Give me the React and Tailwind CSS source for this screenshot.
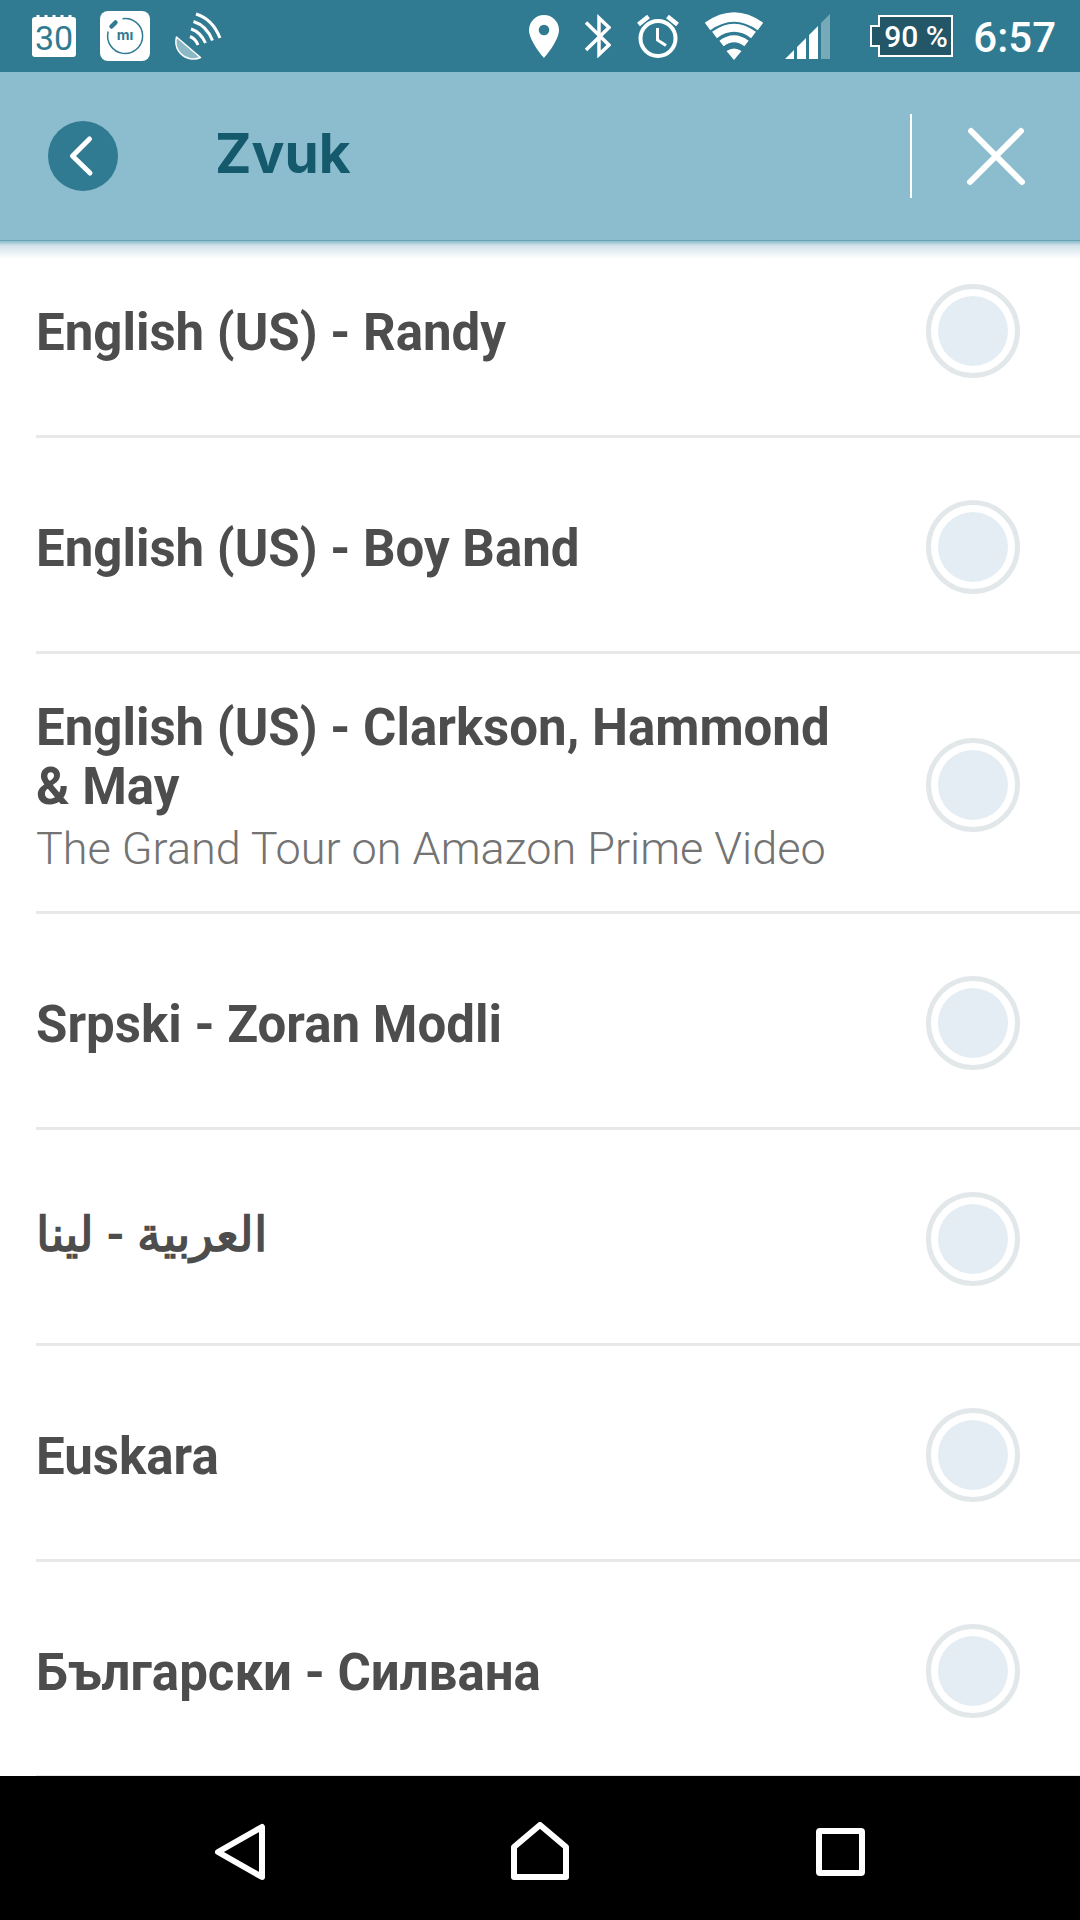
import React, { useState } from "react";

const voices = [
  { id: "randy", name: "English (US) - Randy" },
  { id: "boyband", name: "English (US) - Boy Band" },
  {
    id: "grandtour",
    name: "English (US) - Clarkson, Hammond & May",
    note: "The Grand Tour on Amazon Prime Video"
  },
  { id: "modli", name: "Srpski - Zoran Modli" },
  { id: "lina", name: "العربية - لينا", rtl: true },
  { id: "euskara", name: "Euskara" },
  { id: "silvana", name: "Български - Силвана" }
];

const CalendarIcon = () => (
  <svg className="w-11 h-11" viewBox="0 0 44 44" fill="none">
    <path d="M6 5V1M14 5V1M22 5V1M30 5V1M38 5V1" stroke="#fff" strokeWidth="3" />
    <rect y="3" width="44" height="40" rx="3" fill="#fff" />
    <text x="22" y="36" textAnchor="middle" fontFamily="Roboto, sans-serif" fontSize="34" fill="#307b92">30</text>
  </svg>
);

const MiIcon = () => (
  <svg className="w-[50px] h-[50px]" viewBox="0 0 50 50" fill="none">
    <rect width="50" height="50" rx="8" fill="#fff" />
    <path d="M22.500 7.700A17.500 17.500 0 1 1 8.200 20.500" stroke="#307b92" strokeWidth="1.500" />
    <path d="M11.500 15.500L15.500 11.500" stroke="#307b92" strokeWidth="4.500" strokeLinecap="round" />
    <text x="25" y="29" textAnchor="middle" fontFamily="Inter, sans-serif" fontWeight="700" fontSize="14" fill="#307b92">mı</text>
  </svg>
);

const DishIcon = () => (
  <svg className="w-12 h-[50px]" viewBox="0 0 48 50" fill="none" stroke="#fff">
    <path d="M2.500 26L26.500 46.500C20 49.500 12 48 7 43C2.500 38.500 1 32 2.500 26Z" fill="#8bb8c5" strokeWidth="1.500" strokeLinejoin="round" />
    <path d="M16 25.500Q21.500 27.500 24 34M17 18Q26.500 21 31.500 32M19.500 10.500Q32.500 14.500 38.500 29.500M22 3Q38.500 8 46 27" strokeWidth="3" />
  </svg>
);

const PinIcon = () => (
  <svg className="w-[30px] h-11" viewBox="0 0 30 44" fill="#fff">
    <path fillRule="evenodd" d="M15 1A15 15 0 0 0 0 16C0 27 15 44 15 44S30 27 30 16A15 15 0 0 0 15 1ZM15 10.700A5.300 5.300 0 1 1 15 21.300A5.300 5.300 0 0 1 15 10.700Z" />
  </svg>
);

const BluetoothIcon = () => (
  <svg className="w-[26px] h-11" viewBox="0 0 26 44" fill="none" stroke="#fff" strokeWidth="3.500">
    <path d="M1 8.500L24 31L14 40.500V4L24 13.500L1 36" />
  </svg>
);

const AlarmIcon = () => (
  <svg className="w-[42px] h-11" viewBox="0 0 42 44" fill="none" stroke="#fff">
    <circle cx="21" cy="24.500" r="17.500" strokeWidth="4" />
    <path d="M1.500 10.500L11.500 2.500M40.500 10.500L30.500 2.500" strokeWidth="4.500" />
    <path d="M20.500 14V26L29 31.500" strokeWidth="3" />
  </svg>
);

const WifiIcon = () => (
  <svg className="w-[58px] h-12" viewBox="0 0 58 48" fill="none" stroke="#fff">
    <path d="M2.500 14.500Q29 -4.500 55.500 14.500" strokeWidth="9.500" />
    <path d="M9.500 23Q29 8.500 48.500 23" strokeWidth="8" />
    <path d="M16.500 31.500Q29 22 41.500 31.500" strokeWidth="7" />
    <path d="M21.500 39Q29 34 36.500 39L29 48Z" fill="#fff" stroke="none" />
  </svg>
);

const SignalIcon = () => (
  <svg className="w-[45px] h-[45px]" viewBox="0 0 45 45" fill="#fff">
    <path d="M0 45L9 36V45ZM12 33L21 24V45H12ZM24 21L33 12V45H24Z" />
    <path d="M36 9L45 0V45H36Z" fillOpacity="0.35" />
  </svg>
);

const BatteryIcon = () => (
  <svg className="w-[83px] h-[43px]" viewBox="0 0 83 43">
    <path d="M9 1H82V41H9V31H1V11H9Z" fill="#235666" stroke="#fff" strokeWidth="2" />
    <text x="46" y="32" textAnchor="middle" fontFamily="Roboto, sans-serif" fontWeight="500" fontSize="30" fill="#fff">90 %</text>
  </svg>
);

const StatusBar = () => (
  <div className="flex h-[72px] shrink-0 items-center justify-between bg-[#307b92] pl-8 pr-6">
    <div className="flex items-center gap-6">
      <CalendarIcon />
      <MiIcon />
      <DishIcon />
    </div>
    <div className="flex items-center">
      <div className="flex items-center gap-[26px]">
        <PinIcon />
        <BluetoothIcon />
        <AlarmIcon />
        <WifiIcon />
      </div>
      <div className="ml-[22px] flex items-center gap-10">
        <SignalIcon />
        <BatteryIcon />
      </div>
      <span className="ml-5 pt-1 text-[42px] leading-[48px] font-medium text-white">6:57</span>
    </div>
  </div>
);

const Header = ({ title }) => (
  <header className="relative z-10 flex h-[169px] shrink-0 items-center border-b border-[#69a3b4] bg-[#8bbdce] pl-12 pr-[54px]">
    <button type="button" aria-label="Back" className="flex h-[70px] w-[70px] items-center justify-center rounded-full bg-[#307b92]">
      <svg className="w-[70px] h-[70px]" viewBox="0 0 70 70" fill="none" stroke="#fff" strokeWidth="5" strokeLinecap="round" strokeLinejoin="round">
        <path d="M41.500 18L24.500 35L42 52" />
      </svg>
    </button>
    <h1 className="ml-[97px] flex-1 pb-1.5 font-[Inter,sans-serif] text-[55px] leading-[64px] font-bold text-[#15596d]">{title}</h1>
    <div className="h-[84px] w-0.5 bg-white" />
    <button type="button" aria-label="Close" className="ml-[54px]">
      <svg className="w-[60px] h-[60px]" viewBox="0 0 60 60" fill="none" stroke="#fff" strokeWidth="6" strokeLinecap="round">
        <path d="M5 5L56 56M55 5L4 56" />
      </svg>
    </button>
    <div className="absolute inset-x-0 top-full mt-px h-[18px] bg-linear-to-b from-[#8bbdce] via-[#d3e2ea] via-25% to-transparent" />
  </header>
);

const VoiceRow = ({ voice, selected, onSelect }) => (
  <li className="ml-9 border-b-[3px] border-[#e8e8e8]">
    <label className="flex min-h-[213px] items-center gap-15 pt-10 pr-15 pb-9">
      <span className="flex-1 pt-1">
        {voice.rtl ? (
          <span dir="rtl" className="block pb-3 text-left text-[48px] leading-[59px] font-bold text-[#4d4d4d]">
            {voice.name}
          </span>
        ) : (
          <span className="block text-[51px] leading-[59px] font-bold text-[#4d4d4d]">{voice.name}</span>
        )}
        {voice.note && (
          <span className="mt-1.5 block text-[45px] leading-[53px] font-light text-[#737373]">{voice.note}</span>
        )}
      </span>
      <input
        type="radio"
        name="voice"
        checked={selected}
        onChange={() => onSelect(voice.id)}
        className="h-[94px] w-[94px] shrink-0 appearance-none rounded-full border-[5px] border-[#e2e8ea] bg-[#e4edf3] bg-clip-content p-[7px] checked:bg-[#307b92]"
      />
    </label>
  </li>
);

const NavBar = () => (
  <nav className="grid h-36 shrink-0 grid-cols-3 items-center justify-items-center bg-black px-[90px] pt-2">
    <button type="button" aria-label="Back">
      <svg className="w-[60px] h-[60px]" viewBox="0 0 60 60" fill="none" stroke="#fff" strokeWidth="6" strokeLinejoin="round">
        <path d="M52 5V55L8 30Z" />
      </svg>
    </button>
    <button type="button" aria-label="Home">
      <svg className="w-[60px] h-[60px]" viewBox="0 0 60 60" fill="none" stroke="#fff" strokeWidth="6" strokeLinejoin="round">
        <path d="M30 3L56 25V55H4V25Z" />
      </svg>
    </button>
    <button type="button" aria-label="Recent apps">
      <svg className="w-[60px] h-[60px]" viewBox="0 0 60 60" fill="none" stroke="#fff" strokeWidth="6">
        <rect x="9" y="9" width="43" height="42" rx="1" />
      </svg>
    </button>
  </nav>
);

const App = () => {
  const [selectedVoice, setSelectedVoice] = useState(null);

  return (
    <div className="flex h-screen flex-col bg-white font-[Roboto,'Noto_Sans',sans-serif]">
      <StatusBar />
      <Header title="Zvuk" />
      <main className="min-h-0 flex-1 overflow-hidden">
        {/* first row starts tucked under the header */}
        <ul className="-mt-[19px]">
          {voices.map((v) => (
            <VoiceRow key={v.id} voice={v} selected={selectedVoice === v.id} onSelect={setSelectedVoice} />
          ))}
        </ul>
      </main>
      <NavBar />
    </div>
  );
};

export default App;
